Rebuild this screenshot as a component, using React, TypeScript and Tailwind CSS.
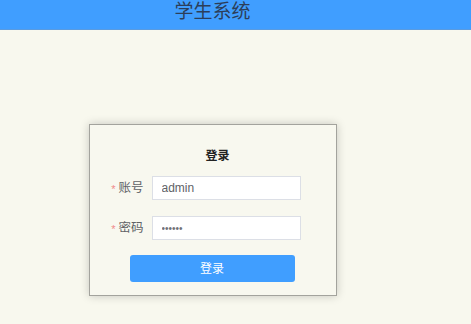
import React from "react";

export default function App() {
  const cjk = { fontFamily: '"Liberation Sans", "Noto Sans CJK SC", sans-serif' };
  return (
    <div className="min-h-[324px] w-full bg-[#f8f8ee]" style={cjk}>
      <div className="h-[30px] bg-[#409eff] border-b border-[#5a9be0]">
        <div className="w-[425px] flex justify-center">
          <span className="text-[19px] leading-[24px] text-[#2c3e5a]">学生系统</span>
        </div>
      </div>
      <div className="w-[425px] flex justify-center pt-[94px]">
        <div className="w-[248px] h-[172px] border border-[#a3a39d] bg-[#f8f8ef] shadow-[0_0_9px_rgba(0,0,0,0.2)] flex flex-col">
          <div className="pt-[23px] pl-[10px] text-center text-[12px] leading-[16px] font-bold text-[#222]">登录</div>
          <div className="mt-[12px] flex items-center">
            <div className="ml-[10px] w-[44px] flex items-center justify-end text-[12.5px] text-[#606266]">
              <span className="text-[#f08a8a] text-[11px] mr-[3px] mt-[2px]">*</span>
              <span>账号</span>
            </div>
            <input
              readOnly
              value="admin"
              className="ml-[8px] w-[149px] h-[24px] bg-white border border-[#dcdfe6] pl-[9px] text-[12px] text-[#606266] outline-none"
            />
          </div>
          <div className="mt-[16px] flex items-center">
            <div className="ml-[10px] w-[44px] flex items-center justify-end text-[12.5px] text-[#606266]">
              <span className="text-[#f08a8a] text-[11px] mr-[3px] mt-[2px]">*</span>
              <span>密码</span>
            </div>
            <input
              readOnly
              type="password"
              value="123456"
              className="ml-[8px] w-[149px] h-[24px] bg-white border border-[#dcdfe6] pl-[9px] text-[10px] text-[#707276] outline-none"
            />
          </div>
          <button className="mt-[15px] ml-[40px] w-[165px] h-[27px] rounded-[3px] bg-[#409eff] text-white text-[12px]">
            登录
          </button>
        </div>
      </div>
    </div>
  );
}
